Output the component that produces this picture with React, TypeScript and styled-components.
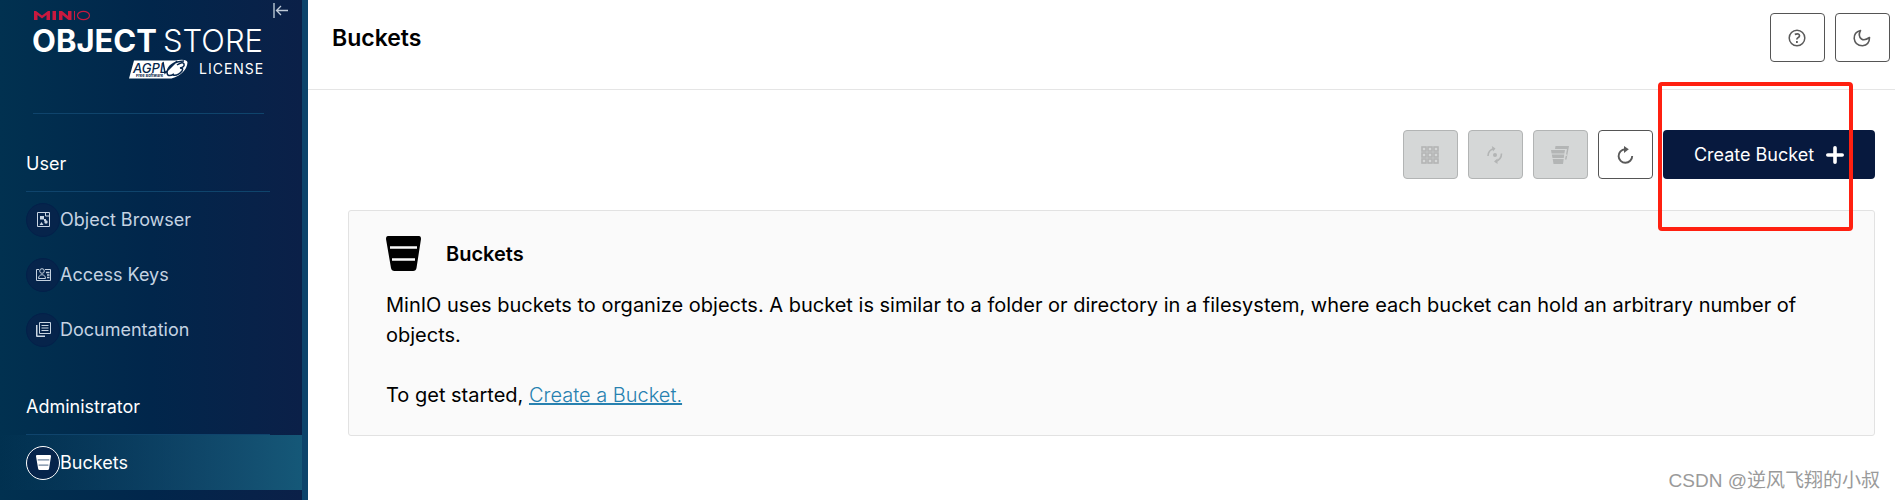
import React from "react";
import styled, { createGlobalStyle, css } from "styled-components";

const GlobalStyle = createGlobalStyle`
  * { box-sizing: border-box; }
  body { margin: 0; background: #fff; color: #000; font-family: Inter, "Noto Sans CJK SC", sans-serif; }
`;

const Layout = styled.div`
  position: relative;
  display: flex;
  height: 100vh;
  overflow: hidden;
`;

const Sidebar = styled.nav`
  position: relative;
  flex: 0 0 308px;
  border-right: 6px solid #0d446b;
  background: linear-gradient(90deg, #013150 0%, #01264b 50%, #0b2048 100%);
  background-clip: padding-box;
  overflow: hidden;
`;

const LogoArea = styled.div`
  height: 114px;
  margin: 0 38px 0 33px;
  border-bottom: 1px solid #0f446c;
`;

const CollapseButton = styled.button`
  position: absolute;
  top: 3px;
  right: 14px;
  padding: 0;
  border: 0;
  background: none;
  line-height: 0;
  cursor: pointer;
`;

const MenuHeading = styled.h2`
  display: flex;
  align-items: flex-end;
  height: 78px;
  margin: 0 32px 0 26px;
  padding-bottom: 15px;
  border-bottom: 1px solid #0f446c;
  color: #fff;
  font-size: 18px;
  line-height: 24px;
  font-weight: 400;
`;

const MenuItem = styled.a<{ $active?: boolean }>`
  display: flex;
  align-items: center;
  height: 55px;
  padding-left: 26px;
  color: ${(p) => (p.$active ? "#fff" : "#c5d3e2")};
  background: ${(p) => (p.$active ? "linear-gradient(90deg, #02345200 0%, #155878 100%)" : "none")};
  font-size: 18px;
  text-decoration: none;
`;

const IconDisc = styled.span<{ $active?: boolean }>`
  display: flex;
  align-items: center;
  justify-content: center;
  width: 34px;
  height: 34px;
  border: 1px solid ${(p) => (p.$active ? "#fff" : "#03204a")};
  border-radius: 50%;
  background: #06244b;
`;

const Main = styled.main`
  flex: 1;
  min-width: 0;
`;

const Header = styled.header`
  display: flex;
  align-items: flex-start;
  justify-content: space-between;
  height: 90px;
  padding: 13px 5px 0 24px;
  border-bottom: 1px solid #e5e5e5;
`;

const PageTitle = styled.h1`
  margin: 0;
  font-size: 23px;
  line-height: 50px;
  font-weight: 600;
`;

const ButtonGroup = styled.div`
  position: relative;
  display: flex;
  justify-content: flex-end;
  gap: 10px;
`;

const buttonBase = css`
  display: flex;
  align-items: center;
  justify-content: center;
  height: 49px;
  border-radius: 4px;
  cursor: pointer;
`;

const IconButton = styled.button`
  ${buttonBase}
  width: 55px;
  padding: 0 1px 0 0;
  border: 1px solid #555;
  background: #fff;
  color: #5a5a5a;
  &:disabled {
    border-color: #b2b4b4;
    background: #d5d7d7;
    color: #b3b5b5;
    cursor: default;
  }
`;

const CreateButton = styled.button`
  ${buttonBase}
  gap: 12px;
  width: 212px;
  border: 0;
  background: #07193e;
  color: #fff;
  font: 400 18px Inter, sans-serif;
`;

const Content = styled.div`
  display: grid;
  gap: 31px;
  padding: 40px 20px 0 40px;
`;

const Highlight = styled.div`
  position: absolute;
  top: -48px;
  right: 22px;
  width: 195px;
  height: 149px;
  border: 4px solid #ff2010;
  border-radius: 4px;
  pointer-events: none;
`;

const Panel = styled.section`
  padding: 24px 38px 25px 37px;
  border: 1px solid #e2e2e2;
  border-radius: 3px;
  background: #fafafa;
`;

const PanelHeading = styled.h2`
  display: flex;
  align-items: center;
  gap: 25px;
  height: 37px;
  margin: 0 0 18px;
  font-size: 20px;
  font-weight: 600;
`;

const Paragraph = styled.p`
  margin: 0 0 30px;
  font-size: 20px;
  line-height: 30px;
  font-weight: 400;
  &:last-child { margin: 0; }
`;

const TextLink = styled.a`
  color: #2781b0;
  font-weight: 300;
`;

const Watermark = styled.div`
  position: absolute;
  right: 15px;
  bottom: 6px;
  color: #9a9a9a;
  font-family: "Liberation Sans", "Noto Sans CJK SC", sans-serif;
  font-size: 19px;
  line-height: 26px;
`;

const LogoDrawing = styled.svg`
  display: block;
  font-family: Inter, sans-serif;
`;

const Logo = () => (
  <LogoDrawing width="232" height="84" viewBox="0 0 232 84" role="img" aria-label="MinIO Object Store, AGPL v3 License">
    <path d="M1 20v-9h2l6 4.500 6-4.500h2v9h-3.500v-5L9 18.500 4.500 15v5zM19.500 11H23v9h-3.500zM26 20v-9h3l6 5v-5h3.500v9h-3l-6-5v5z" fill="#c8193f" />
    <path d="M41.500 11v9" stroke="#c8193f" />
    <ellipse cx="50.500" cy="15.500" rx="6" ry="4.200" fill="none" stroke="#c8193f" strokeWidth="1.200" />
    <text x="-1" y="52" fontSize="31" fontWeight="700" fill="#fff">OBJECT</text>
    <text x="130" y="52" fontSize="31" fontWeight="300" fill="#fff">STORE</text>
    <path d="M101 60.500h41q12-2 12.500 2-1 11-16 16H96z" fill="#fff" />
    <text x="100" y="73" fontSize="13" fontStyle="italic" fontWeight="500" fill="#06264c">AGPL</text>
    <text x="103" y="77" fontSize="4" fontWeight="700" fill="#06264c">Free Software</text>
    <path d="M130 62l2 11 12-12M151 61q-15 1-17 11 0 6 7 2M144 65q6-4 7-1 1 3-4 4 4 0 2 3-4 5-9 4" fill="none" stroke="#06264c" strokeWidth="1.500" />
    <text x="166" y="74" fontSize="14" fill="#fff" letterSpacing="1">LICENSE</text>
  </LogoDrawing>
);

const CollapseIcon = () => (
  <svg width="15" height="15" viewBox="0 0 15 15" fill="none" stroke="#c0cbd8" aria-hidden="true">
    <path d="M1 0v15" strokeWidth="2" stroke="#8395aa" />
    <path d="M15 7.500H4M8 3L3.500 7.500 8 12" strokeWidth="1.300" />
  </svg>
);

const BrowserIcon = () => (
  <svg width="15" height="15" viewBox="0 0 15 15" aria-hidden="true">
    <path d="M1.500.5h12v14h-12zM9.500.5v3.500h4" fill="none" stroke="#c9d5e2" />
    <path d="M4 4h4v3.500H4zM5.500 10l2 3h-4zM8 7h2v2H8z" fill="#c9d5e2" />
    <circle cx="10" cy="10" r="1.700" fill="#c9d5e2" />
  </svg>
);

const KeysIcon = () => (
  <svg width="15" height="13" viewBox="0 0 15 13" fill="none" stroke="#c5d1df" aria-hidden="true">
    <path d="M3 1.500H.5v11h14v-11H9" />
    <circle cx="6" cy="3" r="2.300" />
    <path d="M2.500 10.500c0-5 7-5 7 0z" />
    <path d="M10 4.500h3.500M11 7h2.500M11 9.500h2.500" strokeWidth="1.500" />
  </svg>
);

const DocsIcon = () => (
  <svg width="15" height="15" viewBox="0 0 15 15" fill="none" stroke="#c9d5e2" aria-hidden="true">
    <path d="M3.500.5h11v11h-11zM.5 3v11.500H9M5.500 3.500h7M5.500 6h7M5.500 8.500h7" />
    <path d="M1 3v11h8" />
  </svg>
);

const BucketIcon = ({ size, line }: { size: number; line: string }) => (
  <svg width={size} height={size} viewBox="0 0 35 35" aria-hidden="true">
    <path d="M2 0h31q2 0 2 3l-4.500 29q-.5 3-3.500 3H8.500q-3 0-3.500-3L0 3q0-3 2-3z" fill="currentColor" />
    <path d="M4 11.500h27M6 23.500h23" stroke={line} strokeWidth={size < 20 ? 3 : 2.300} />
  </svg>
);

const HelpIcon = () => (
  <svg width="18" height="18" viewBox="0 0 18 18" fill="none" stroke="currentColor" aria-hidden="true">
    <circle cx="9" cy="9" r="7.800" strokeWidth="1.500" />
    <path d="M6.800 5.400Q11.500 4 11.500 6.800C11.500 9 9 8 8.800 10.500" strokeWidth="1.700" />
    <path d="M8 12h1.800v2H8z" fill="currentColor" stroke="none" />
  </svg>
);

const MoonIcon = () => (
  <svg width="18" height="18" viewBox="0 0 18 18" fill="none" stroke="currentColor" strokeWidth="1.600" strokeLinejoin="round" aria-hidden="true">
    <path d="M7.500 1.500Q4.500 7 8.500 10 11.500 12 16.500 8.500 16.500 16 9.500 16.700 2 16.700 1.200 9.500 1 3 7.500 1.500z" />
  </svg>
);

const GridIcon = () => (
  <svg width="18" height="18" viewBox="0 0 18 18" fill="none" stroke="currentColor" strokeWidth="1.600" aria-hidden="true">
    {[1, 7, 13].map((y) => [1, 7, 13].map((x) => <rect key={`${x}-${y}`} x={x} y={y} width="4" height="4" />))}
  </svg>
);

const LifecycleIcon = () => (
  <svg width="18" height="18" viewBox="0 0 18 18" fill="none" stroke="currentColor" strokeWidth="1.600" aria-hidden="true">
    <path d="M2 10q.2-6 6-7.500M15.500 7.500q0 6-6 8" />
    <path d="M5.800 0l3.700 2.500L7 5.500zM11.500 12.500L8 15.500l3.500 2.500z" fill="currentColor" stroke="none" />
    <circle cx="9" cy="9" r="2" fill="currentColor" stroke="none" />
  </svg>
);

const ReplicateIcon = () => (
  <svg width="18" height="18" viewBox="0 0 18 18" fill="currentColor" aria-hidden="true">
    <path d="M4.500 0h13.500l-2.500 13.500H14l.7-3.500h1l.3-1.500h-1L16 3H4z" />
    <path d="M0 4h14l-.6 3.500H.6zM.8 8.500h12.400l-.4 3.500H1.500zM1.700 13h11l-.7 5H2.500z" />
  </svg>
);

const RefreshIcon = () => (
  <svg width="18" height="18" viewBox="0 0 18 18" fill="none" stroke="currentColor" strokeWidth="1.900" aria-hidden="true">
    <path d="M10 3.200H9.200a6.800 6.800 0 1 0 7 6.800" />
    <path d="M8 0l4.800 3.300L8 7z" fill="currentColor" stroke="none" />
  </svg>
);

const PlusIcon = () => (
  <svg width="18" height="18" viewBox="0 0 18 18" stroke="#fff" strokeWidth="3.600" strokeLinecap="round" aria-hidden="true">
    <path d="M9 1.800v14.400M1.800 9h14.400" />
  </svg>
);

const userItems = [
  { label: "Object Browser", icon: <BrowserIcon /> },
  { label: "Access Keys", icon: <KeysIcon /> },
  { label: "Documentation", icon: <DocsIcon /> },
];

export default function App() {
  return (
    <Layout>
      <GlobalStyle />
      <Sidebar>
        <LogoArea><Logo /></LogoArea>
        <CollapseButton aria-label="Collapse menu"><CollapseIcon /></CollapseButton>
        <MenuHeading>User</MenuHeading>
        {userItems.map((item) => (
          <MenuItem key={item.label} href="#">
            <IconDisc>{item.icon}</IconDisc>
            {item.label}
          </MenuItem>
        ))}
        <MenuHeading>Administrator</MenuHeading>
        <MenuItem href="#" $active>
          <IconDisc $active><BucketIcon size={15} line="#6d829c" /></IconDisc>
          Buckets
        </MenuItem>
      </Sidebar>
      <Main>
        <Header>
          <PageTitle>Buckets</PageTitle>
          <ButtonGroup>
            <IconButton aria-label="Help"><HelpIcon /></IconButton>
            <IconButton aria-label="Dark mode"><MoonIcon /></IconButton>
          </ButtonGroup>
        </Header>
        <Content>
          <ButtonGroup>
            <IconButton disabled aria-label="Select buckets"><GridIcon /></IconButton>
            <IconButton disabled aria-label="Set lifecycle"><LifecycleIcon /></IconButton>
            <IconButton disabled aria-label="Set replication"><ReplicateIcon /></IconButton>
            <IconButton aria-label="Refresh"><RefreshIcon /></IconButton>
            <CreateButton>Create Bucket<PlusIcon /></CreateButton>
            <Highlight />
          </ButtonGroup>
          <Panel>
            <PanelHeading><BucketIcon size={35} line="#fafafa" />Buckets</PanelHeading>
            <Paragraph>
              MinIO uses buckets to organize objects. A bucket is similar to a folder or directory in a filesystem, where each bucket can hold an arbitrary number of objects.
            </Paragraph>
            <Paragraph>To get started, <TextLink href="#">Create a Bucket.</TextLink></Paragraph>
          </Panel>
        </Content>
      </Main>
      <Watermark>CSDN @逆风飞翔的小叔</Watermark>
    </Layout>
  );
}
